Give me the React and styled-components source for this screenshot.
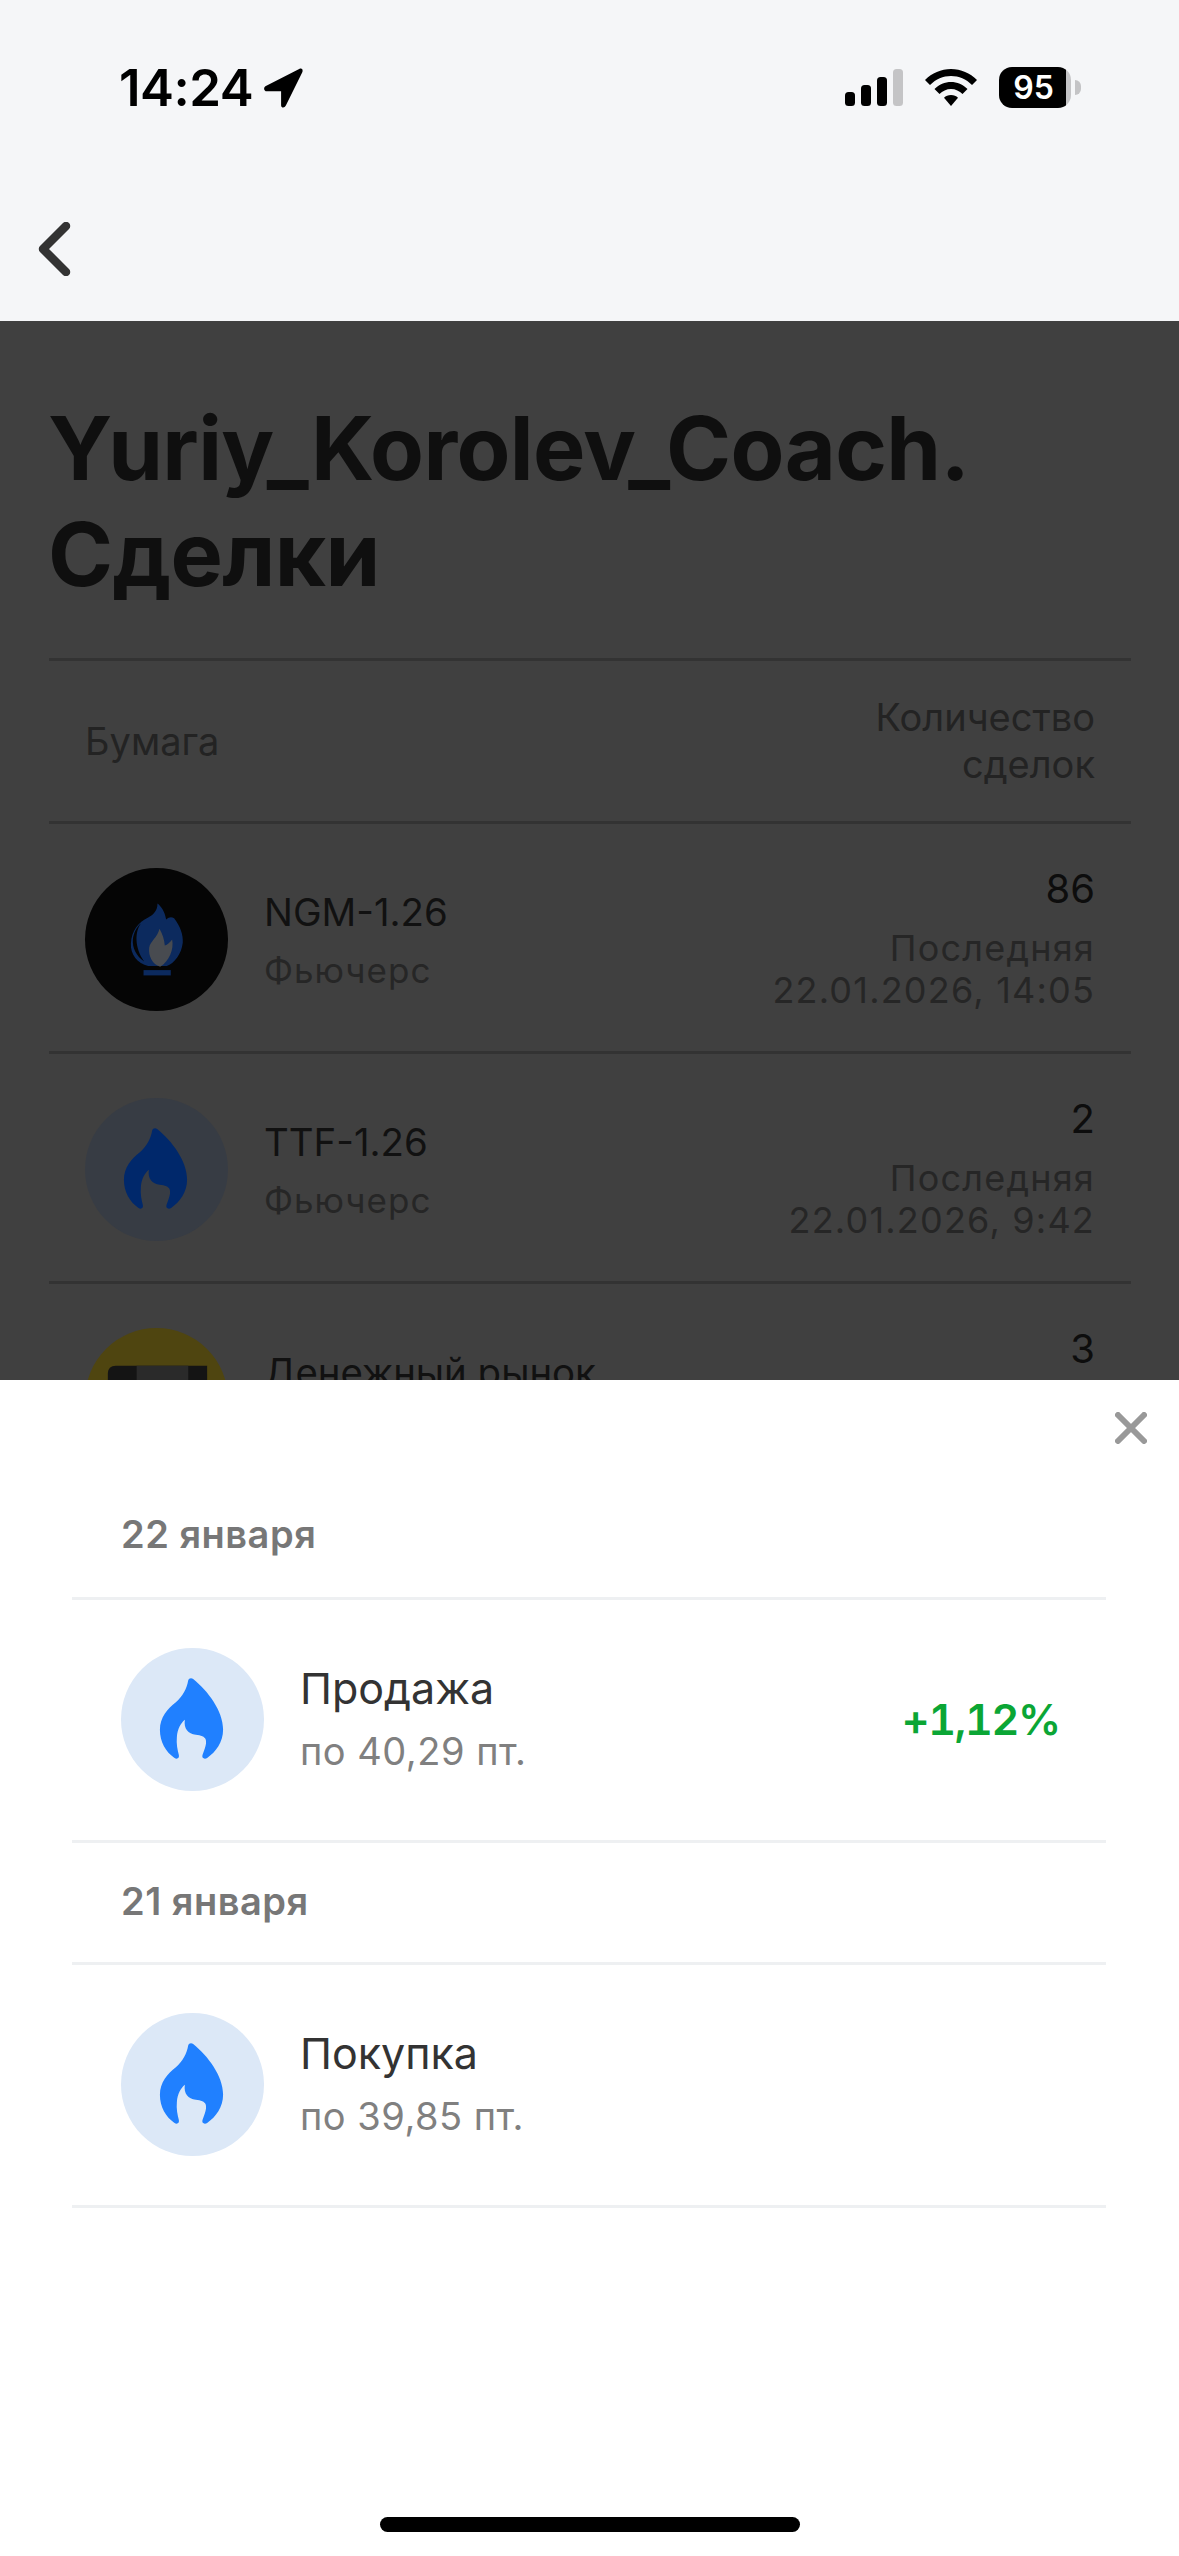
import React from 'react';
import styled, { createGlobalStyle } from 'styled-components';

const GlobalStyle = createGlobalStyle`
    html, body {
        margin: 0;
        padding: 0;
        background: #fff;
    }
    * {
        box-sizing: border-box;
    }
`

const Screen = styled.div`
    position: relative;
    display: flex;
    flex-direction: column;
    width: 1179px;
    height: 2556px;
    overflow: hidden;
    font-family: Inter, "Noto Sans", sans-serif;
`

const Top = styled.header`
    flex: none;
    height: 321px;
    background: #f5f6f8;
`

const StatusBar = styled.div`
    display: flex;
    justify-content: space-between;
    align-items: center;
    height: 41px;
    margin-top: 67px;
    padding: 0 108px 0 119px;
`

const Clock = styled.div`
    display: flex;
    align-items: center;
    gap: 10px;
    font-size: 51px;
    font-weight: 600;
    letter-spacing: -0.5px;
    color: #000;
`

const StatusIcons = styled.div`
    display: flex;
    align-items: center;
    gap: 22px;
`

const Battery = styled.div`
    position: relative;
    display: flex;
    justify-content: center;
    align-items: center;
    width: 72px;
    height: 41px;
    padding-right: 3px;
    border-radius: 13px;
    background: linear-gradient(90deg, #000 93%, #c4c4c6 93%);
    color: #fff;
    font-size: 32px;
    font-weight: 600;
    &::after {
        content: '';
        position: absolute;
        right: -10px;
        top: 13px;
        width: 6px;
        height: 15px;
        border-radius: 0 8px 8px 0;
        background: #c4c4c6;
    }
`

const NavBar = styled.nav`
    display: flex;
    align-items: center;
    height: 54px;
    margin-top: 114px;
    padding-left: 37px;
`

const Dimmed = styled.main`
    flex: 1;
    padding: 74px 48px 0 49px;
    background: #404040;
`

const Title = styled.h1`
    margin: 0 0 51px -1px;
    font-size: 88px;
    line-height: 106px;
    font-weight: 700;
    letter-spacing: -0.65px;
    color: #0f0f0f;
`

const TableHead = styled.div`
    display: flex;
    justify-content: space-between;
    align-items: center;
    height: 166px;
    padding: 0 36px;
    border-top: 3px solid #333;
    border-bottom: 3px solid #333;
    font-size: 38px;
    line-height: 47px;
    color: #232323;
`

const HeadRight = styled.div`
    text-align: right;
`

const Row = styled.div`
    display: flex;
    align-items: center;
    height: 230px;
    padding: 3px 36px 0;
    border-bottom: 3px solid #333;
`

const Logo = styled.div`
    flex: none;
    width: 143px;
    height: 143px;
    margin-right: 36px;
    border-radius: 50%;
    overflow: hidden;
    background: ${p => p.$bg};
    svg {
        display: block;
        width: 100%;
        height: 100%;
    }
`

const Info = styled.div`
    flex: 1;
`

const Name = styled.div`
    font-size: 38.4px;
    line-height: 50px;
    color: #111;
`

const Kind = styled.div`
    margin-top: 11px;
    font-size: 35px;
    line-height: 44px;
    letter-spacing: 1px;
    color: #262626;
`

const Meta = styled.div`
    display: flex;
    flex-direction: column;
    align-items: flex-end;
    font-size: 36px;
    line-height: 42px;
    letter-spacing: 1.2px;
    color: #262626;
`

const Count = styled.div`
    margin-bottom: 16px;
    font-size: 40px;
    line-height: 44px;
    letter-spacing: 0;
    color: #0d0d0d;
`

const Sheet = styled.section`
    position: absolute;
    left: 0;
    right: 0;
    bottom: 0;
    height: 1176px;
    padding: 96px 73px 0 72px;
    background: #fff;
`

const CloseButton = styled.button`
    position: absolute;
    top: 32px;
    right: 32px;
    width: 32px;
    height: 32px;
    padding: 0;
    border: 0;
    background: none;
    svg {
        display: block;
    }
`

const DateHead = styled.div`
    display: flex;
    align-items: center;
    height: ${p => p.$first ? '124px' : '122px'};
    padding: ${p => p.$first ? '0 0 6px 49px' : '0 0 3px 49px'};
    border-bottom: 3px solid #eef0f2;
    font-size: 38px;
    font-weight: 600;
    letter-spacing: 0.5px;
    color: #777;
`

const Deal = styled.div`
    display: flex;
    align-items: center;
    height: 243px;
    padding: 0 46px 2px 49px;
    border-bottom: 3px solid #eef0f2;
`

const DealInfo = styled.div`
    flex: 1;
    padding-bottom: 2px;
`

const DealName = styled.div`
    font-size: 43px;
    line-height: 50px;
    color: #333;
`

const DealPrice = styled.div`
    margin-top: 16px;
    font-size: 38px;
    line-height: 44px;
    letter-spacing: 0.5px;
    color: #808080;
`

const Profit = styled.div`
    font-size: 43px;
    font-weight: 600;
    font-feature-settings: 'tnum';
    letter-spacing: -1.3px;
    color: #0ba635;
`

const HomeIndicator = styled.div`
    position: absolute;
    left: 380px;
    bottom: 24px;
    width: 420px;
    height: 15px;
    border-radius: 8px;
    background: #000;
`

const LocationIcon = () => (
    <svg width="40" height="40" viewBox="0 0 42 42">
        <path d="M38 1 L3 19 C0 20.500 1 24.500 4 24.500 L19 24.500 L19 39 C19 42 22.500 42.500 24 39.500 L41 5 C42.500 2 41 -0.500 38 1 Z" fill="#000" />
    </svg>
);

const SignalIcon = () => (
    <svg width="58" height="37" viewBox="0 0 58 37">
        <rect x="0" y="23" width="10" height="14" rx="3.500" fill="#000" />
        <rect x="16" y="16" width="10" height="21" rx="3.500" fill="#000" />
        <rect x="32" y="8" width="10" height="29" rx="3.500" fill="#000" />
        <rect x="48" y="0" width="10" height="37" rx="3.500" fill="#c4c4c6" />
    </svg>
);

const WifiIcon = () => (
    <svg width="52" height="38" viewBox="0 0 52 38">
        <path d="M26 0 C36 0 45 4 52 11 L47 16 C41 10 34 7 26 7 C18 7 11 10 5 16 L0 11 C7 4 16 0 26 0 Z" fill="#000" />
        <path d="M26 13 C32 13 38 15.500 42.500 20 L37.500 25 C34.500 22 30.500 20 26 20 C21.500 20 17.500 22 14.500 25 L9.500 20 C14 15.500 20 13 26 13 Z" fill="#000" />
        <path d="M26 26 C28.800 26 31.300 27 33 28.800 L26 37 L19 28.800 C20.700 27 23.200 26 26 26 Z" fill="#000" />
    </svg>
);

const BackIcon = () => (
    <svg width="36" height="54" viewBox="0 0 36 54">
        <path d="M29 4 L6 27 L29 50" fill="none" stroke="#333" strokeWidth="8.5" strokeLinecap="round" strokeLinejoin="round" />
    </svg>
);

const CloseIcon = () => (
    <svg width="32" height="32" viewBox="0 0 32 32">
        <path d="M3 3 L29 29 M29 3 L3 29" stroke="#999" strokeWidth="6" strokeLinecap="round" />
    </svg>
);

// path is in the coords of a 430px circle
const FlameIcon = ({ color }) => (
    <svg viewBox="60 52 430 430">
        <path
            d="M262 150 C264 142 272 141 278 146 C320 180 367 240 367 298 C367 335 345 365 320 382 C312 388 302 384 305 374 C312 355 318 340 315 328 C312 318 300 315 285 313 C262 310 248 295 252 268 C240 278 230 295 228 320 C226 340 230 358 234 374 C236 384 228 388 220 382 C195 365 177 335 177 298 C177 260 200 235 225 215 C245 198 258 175 262 150 Z"
            fill={color}
        />
    </svg>
);

const GazIcon = () => (
    <svg viewBox="72 85 430 430">
        <path d="M290 192 C300 200 312 215 316 240 C325 232 332 232 340 236 C358 260 368 285 366 310 C362 345 340 372 318 380 L262 380 C230 372 208 345 210 312 C212 275 232 248 262 234 C275 228 290 215 290 192 Z" fill="#0c2a5e" />
        <path d="M296 268 C306 285 310 300 312 318 C320 316 328 308 334 300 C340 330 325 365 298 382 C275 375 262 350 265 325 C268 305 290 295 296 268 Z" fill="#484b50" />
        <path d="M240 252 C222 275 220 325 250 366 C226 350 214 325 216 300 C218 280 228 262 240 252 Z" fill="#050505" />
        <rect x="248" y="392" width="82" height="16" fill="#0c2a5e" />
    </svg>
);

const CoinIcon = () => (
    <svg viewBox="0 0 144 144">
        <path d="M31 38 L123 38 L123 110 L23 110 L23 46 C23 41 26 38 31 38 Z" fill="#141414" />
        <path d="M52 38 L104 38 L104 110 L52 110 Z" fill="#2a2a2a" />
        <path d="M62 62 C62 50 92 50 92 62 L92 110 L62 110 Z" fill="#404040" />
    </svg>
);

const deals = [
    { date: '22 января', name: 'Продажа', price: 'по 40,29 пт.', profit: '+1,12%' },
    { date: '21 января', name: 'Покупка', price: 'по 39,85 пт.' },
];

const App = () => {
    return (
        <Screen>
            <GlobalStyle />
            <Top>
                <StatusBar>
                    <Clock>14:24 <LocationIcon /></Clock>
                    <StatusIcons>
                        <SignalIcon />
                        <WifiIcon />
                        <Battery>95</Battery>
                    </StatusIcons>
                </StatusBar>
                <NavBar>
                    <BackIcon />
                </NavBar>
            </Top>

            <Dimmed>
                <Title>Yuriy_Korolev_Coach.<br />Сделки</Title>
                <TableHead>
                    <div>Бумага</div>
                    <HeadRight>Количество<br />сделок</HeadRight>
                </TableHead>
                <Row>
                    <Logo $bg="#050505"><GazIcon /></Logo>
                    <Info>
                        <Name>NGM-1.26</Name>
                        <Kind>Фьючерс</Kind>
                    </Info>
                    <Meta>
                        <Count>86</Count>
                        <div>Последняя</div>
                        <div>22.01.2026, 14:05</div>
                    </Meta>
                </Row>
                <Row>
                    <Logo $bg="#373c44"><FlameIcon color="#00286b" /></Logo>
                    <Info>
                        <Name>TTF-1.26</Name>
                        <Kind>Фьючерс</Kind>
                    </Info>
                    <Meta>
                        <Count>2</Count>
                        <div>Последняя</div>
                        <div>22.01.2026, 9:42</div>
                    </Meta>
                </Row>
                <Row>
                    <Logo $bg="#4f4510"><CoinIcon /></Logo>
                    <Info>
                        <Name>Денежный рынок</Name>
                        <Kind>&nbsp;</Kind>
                    </Info>
                    <Meta>
                        <Count>3</Count>
                        <div>&nbsp;</div>
                        <div>&nbsp;</div>
                    </Meta>
                </Row>
            </Dimmed>

            <Sheet>
                <CloseButton><CloseIcon /></CloseButton>
                {deals.map((deal, i) => (
                    <div key={deal.date}>
                        <DateHead $first={i === 0}>{deal.date}</DateHead>
                        <Deal>
                            <Logo $bg="#dce8f7"><FlameIcon color="#2080ff" /></Logo>
                            <DealInfo>
                                <DealName>{deal.name}</DealName>
                                <DealPrice>{deal.price}</DealPrice>
                            </DealInfo>
                            {deal.profit && <Profit>{deal.profit}</Profit>}
                        </Deal>
                    </div>
                ))}
                <HomeIndicator />
            </Sheet>
        </Screen>
    );
};

export default App;
